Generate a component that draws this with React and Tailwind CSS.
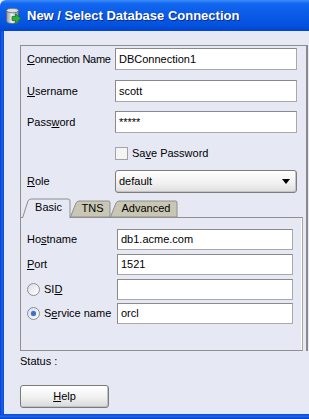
const font = "font-['Liberation_Sans',Arial,sans-serif]"

const Mn = ({ children }) => <span className="underline underline-offset-[1px]">{children}</span>

const TextField = ({ value, className = '' }) => (
  <div
    className={`flex items-center border border-[#8a8a8a] border-b-[#a9a9a9] border-r-[#a9a9a9] bg-white pl-[3px] text-[11px] text-black ${className}`}
  >
    {value}
  </div>
)

const Radio = ({ checked }) => (
  <span className="flex h-[13px] w-[13px] items-center justify-center rounded-full border border-[#8c8f98] bg-[linear-gradient(135deg,#dcdee4,#ffffff)]">
    {checked && <span className="h-[5px] w-[5px] rounded-full bg-[#3f6fd0] shadow-[0_0_1px_#6e95e6]" />}
  </span>
)

const Tab = ({ label, active, width }) => (
  <div
    className={`relative flex items-center justify-center ${active ? 'z-10 -mb-px h-[20px]' : 'h-[17px] -ml-[1px]'}`}
    style={{ width }}
  >
    <svg className="absolute inset-0" width={width} height={active ? 20 : 17} viewBox={`0 0 ${width} ${active ? 20 : 17}`}>
      {active ? (
        <path
          d={`M0.5 20 L6 3 Q7 1 9 1 L${width - 3} 1 Q${width - 1} 1 ${width - 1} 3 L${width - 1} 20`}
          fill="#e6e9f4"
          stroke="#8e8e8e"
        />
      ) : (
        <path
          d={`M0.5 17 L6 3 Q7 1 9 1 L${width - 2} 1 Q${width - 1} 1 ${width - 1} 3 L${width - 1} 17 Z`}
          fill="#c9c7b3"
          stroke="#8e8e8e"
        />
      )}
    </svg>
    <span className={`relative pl-[4px] text-[11px] text-black ${active ? 'pb-[1px]' : ''}`}>{label}</span>
  </div>
)

const DbIcon = () => (
  <svg width="17" height="18" viewBox="0 0 17 18">
    <defs>
      <linearGradient id="cyl" x1="0" x2="1" y1="0" y2="0">
        <stop offset="0" stopColor="#8d95a3" />
        <stop offset="0.45" stopColor="#f2f4f7" />
        <stop offset="1" stopColor="#7d8593" />
      </linearGradient>
    </defs>
    <path d="M1.5 3.5 V14 Q1.5 16.5 7.5 16.5 Q13.5 16.5 13.5 14 V3.5 Z" fill="url(#cyl)" stroke="#5b6370" strokeWidth="0.8" />
    <ellipse cx="7.5" cy="3.5" rx="6" ry="2.3" fill="#d9dde4" stroke="#5b6370" strokeWidth="0.8" />
    <path d="M7 9.5 H10.5 V6.8 L15.8 11.5 L10.5 16.2 V13.5 H7 Z" fill="#27b13b" stroke="#11701f" strokeWidth="0.7" />
  </svg>
)

export default function App() {
  return (
    <div className={`h-[419px] w-[309px] overflow-hidden bg-[#e6e9f4] ${font}`}>
      {/* title bar */}
      <div className="flex h-[31px] items-center gap-[5px] rounded-tl-[6px] bg-[linear-gradient(180deg,#3c8cf8_0%,#1166f0_12%,#0a5ae6_50%,#0453e0_80%,#0044cc_100%)] pl-[5px]">
        <DbIcon />
        <span className="text-[13px] font-bold text-white [text-shadow:1px_1px_0_#0a2c86]">
          New / Select Database Connection
        </span>
      </div>

      <div className="flex h-[383px]">
        <div className="w-[4px] bg-[linear-gradient(90deg,#0a3cc0,#1a62f0_50%,#0a4ad8)]" />
        <div className="flex flex-1 flex-col pl-[16px] text-[11px] text-black">
          {/* main panel */}
          <div className="mt-[14px] flex w-[288px] flex-col border-l border-t border-r-2 border-[#8f8f8f] border-r-[#8a8a8a]">
            <div className="flex flex-col pt-[2px] pr-[9px]">
              <div className="flex h-[22px] items-center">
                <span className="w-[94px] shrink-0 whitespace-nowrap pl-[6px] tracking-[-0.3px]">
                  <Mn>C</Mn>onnection Name
                </span>
                <TextField value="DBConnection1" className="h-[22px] flex-1" />
              </div>
              <div className="mt-[10px] flex h-[22px] items-center">
                <span className="w-[94px] shrink-0 pl-[6px]">
                  <Mn>U</Mn>sername
                </span>
                <TextField value="scott" className="h-[22px] flex-1" />
              </div>
              <div className="mt-[9px] flex h-[22px] items-center">
                <span className="w-[94px] shrink-0 pl-[6px]">
                  Pass<Mn>w</Mn>ord
                </span>
                <TextField value="*****" className="h-[22px] flex-1" />
              </div>
              <div className="mt-[11px] flex h-[18px] items-center pl-[94px]">
                <span className="h-[13px] w-[13px] border border-[#a3a3a3] bg-[#f4f4f4]" />
                <span className="ml-[4px]">
                  Sa<Mn>v</Mn>e Password
                </span>
              </div>
              <div className="mt-[8px] flex h-[23px] items-center">
                <span className="w-[94px] shrink-0 pl-[6px]">
                  <Mn>R</Mn>ole
                </span>
                <div className="flex h-[23px] flex-1 items-center justify-between rounded-[3px] border border-[#7c7c7c] bg-[linear-gradient(180deg,#ffffff,#f0f0f0_60%,#dedede)] pl-[3px] pr-[6px] shadow-[inset_-1px_-1px_0_#c4c4c4]">
                  <span>default</span>
                  <span className="h-0 w-0 border-x-[4px] border-t-[5px] border-x-transparent border-t-black" />
                </div>
              </div>
            </div>

            {/* tabs */}
            <div className="mt-[5px] flex items-end pl-[1px]">
              <Tab label="Basic" active width={49} />
              <Tab label="TNS" width={41} />
              <Tab label="Advanced" width={68} />
            </div>
            <div className="-ml-px flex w-[283px] flex-col border border-[#8f8f8f] border-r-[#a8a8a8] pb-[26px] pl-[6px] pr-[9px] pt-[11px] shadow-[inset_-1px_0_0_#ffffff]">
              <div className="flex h-[21px] items-center">
                <span className="w-[90px] shrink-0">
                  Ho<Mn>s</Mn>tname
                </span>
                <TextField value="db1.acme.com" className="h-[21px] flex-1" />
              </div>
              <div className="mt-[4px] flex h-[21px] items-center">
                <span className="w-[90px] shrink-0">
                  <Mn>P</Mn>ort
                </span>
                <TextField value="1521" className="h-[21px] flex-1" />
              </div>
              <div className="mt-[4px] flex h-[21px] items-center">
                <span className="flex w-[90px] shrink-0 items-center gap-[4px]">
                  <Radio />
                  <span>
                    SI<Mn>D</Mn>
                  </span>
                </span>
                <TextField value="" className="h-[21px] flex-1" />
              </div>
              <div className="mt-[3px] flex h-[21px] items-center">
                <span className="flex w-[90px] shrink-0 items-center gap-[4px]">
                  <Radio checked />
                  <span>
                    S<Mn>e</Mn>rvice name
                  </span>
                </span>
                <TextField value="orcl" className="h-[21px] flex-1" />
              </div>
            </div>
          </div>

          <div className="mt-[3px] h-[14px] leading-[14px]">Status :</div>

          <button
            type="button"
            className="mt-[17px] flex h-[23px] w-[89px] items-center justify-center rounded-[3px] border border-[#7b7b7b] bg-[linear-gradient(180deg,#ffffff,#f2f2f2_50%,#d9d9d9)] text-[11px] text-black shadow-[inset_-1px_-1px_0_#c2c2c2]"
          >
            <span>
              <Mn>H</Mn>elp
            </span>
          </button>
        </div>
      </div>
      <div className="h-[5px] bg-[linear-gradient(180deg,#0a4ad8,#1a62f0_50%,#0a3cc0)]" />
    </div>
  )
}
